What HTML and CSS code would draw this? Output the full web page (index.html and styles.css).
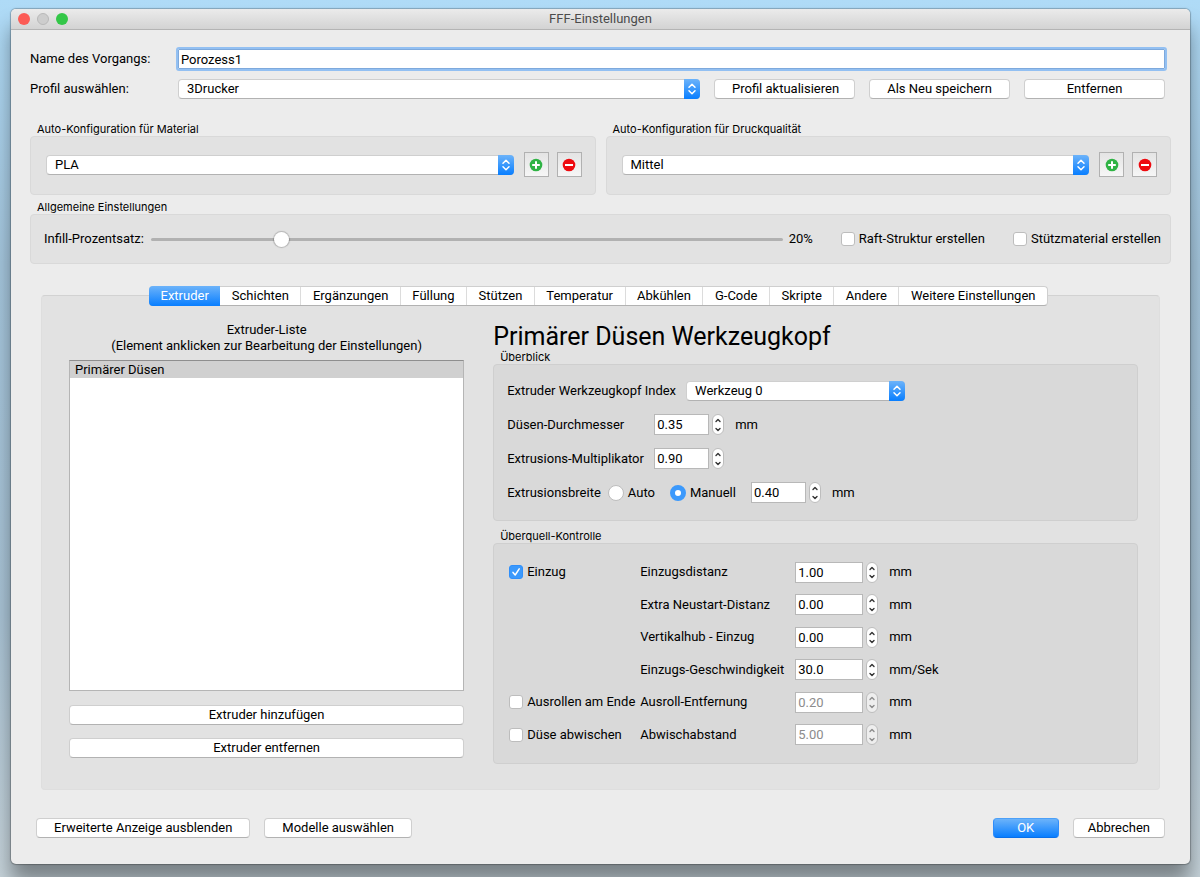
FILE: index.html
```html
<!DOCTYPE html>
<html lang="de">
<head>
    <meta charset="UTF-8">
    <meta name="viewport" content="width=device-width, initial-scale=1.0">
    <title>FFF-Einstellungen</title>
    <link rel="stylesheet" href="styles.css">
</head>
<body>
    <!-- shared icons -->
    <svg class="icon-defs" aria-hidden="true">
        <symbol id="icon-updown" viewBox="0 0 16 20">
            <path d="M5 8.2 8 5.2l3 3M5 11.8l3 3 3-3" fill="none" stroke="#fff" stroke-width="1.5" stroke-linecap="round" stroke-linejoin="round"/>
        </symbol>
        <symbol id="icon-up" viewBox="0 0 10 10">
            <path d="M3 6.5 5 4.5l2 2" fill="none" stroke="currentColor" stroke-width="1.4" stroke-linecap="round" stroke-linejoin="round"/>
        </symbol>
        <symbol id="icon-down" viewBox="0 0 10 10">
            <path d="M3 3.5l2 2 2-2" fill="none" stroke="currentColor" stroke-width="1.4" stroke-linecap="round" stroke-linejoin="round"/>
        </symbol>
        <symbol id="icon-plus" viewBox="0 0 14 14">
            <circle cx="7" cy="7" r="6.3" fill="#2fb344"/>
            <path d="M7 3.2v7.6M3.2 7h7.6" stroke="#fff" stroke-width="2"/>
        </symbol>
        <symbol id="icon-minus" viewBox="0 0 14 14">
            <circle cx="7" cy="7" r="6.3" fill="#ee0a0f"/>
            <path d="M3 7h8" stroke="#fff" stroke-width="2"/>
        </symbol>
    </svg>

    <div class="window">
        <header class="titlebar">
            <div class="lights">
                <span class="light red"></span>
                <span class="light gray"></span>
                <span class="light green"></span>
            </div>
            <h1>FFF-Einstellungen</h1>
        </header>

        <main class="content">
            <div class="profile">
                <label for="processName">Name des Vorgangs:</label>
                <input type="text" id="processName" class="process-name" value="Porozess1">

                <label for="profile">Profil auswählen:</label>
                <span class="select">
                    <select id="profile"><option>3Drucker</option></select>
                    <svg><use href="#icon-updown"/></svg>
                </span>
                <button class="btn">Profil aktualisieren</button>
                <button class="btn">Als Neu speichern</button>
                <button class="btn">Entfernen</button>
            </div>

            <div class="auto-config">
                <section>
                    <label class="caption" for="material">Auto-Konfiguration für Material</label>
                    <div class="box config-row">
                        <span class="select">
                            <select id="material"><option>PLA</option></select>
                            <svg><use href="#icon-updown"/></svg>
                        </span>
                        <button class="icon-btn" aria-label="Material hinzufügen"><svg><use href="#icon-plus"/></svg></button>
                        <button class="icon-btn" aria-label="Material entfernen"><svg><use href="#icon-minus"/></svg></button>
                    </div>
                </section>
                <section>
                    <label class="caption" for="quality">Auto-Konfiguration für Druckqualität</label>
                    <div class="box config-row">
                        <span class="select">
                            <select id="quality"><option>Mittel</option></select>
                            <svg><use href="#icon-updown"/></svg>
                        </span>
                        <button class="icon-btn" aria-label="Qualität hinzufügen"><svg><use href="#icon-plus"/></svg></button>
                        <button class="icon-btn" aria-label="Qualität entfernen"><svg><use href="#icon-minus"/></svg></button>
                    </div>
                </section>
            </div>

            <section class="general">
                <h2 class="caption">Allgemeine Einstellungen</h2>
                <div class="box general-row">
                    <label for="infill">Infill-Prozentsatz:</label>
                    <input type="range" id="infill" min="0" max="100" value="20">
                    <output for="infill" id="infillValue">20%</output>
                    <label class="check"><input type="checkbox">Raft-Struktur erstellen</label>
                    <label class="check"><input type="checkbox">Stützmaterial erstellen</label>
                </div>
            </section>

            <div class="pane">
                <div class="tabs" role="tablist">
                    <button role="tab" class="active" aria-selected="true">Extruder</button>
                    <button role="tab">Schichten</button>
                    <button role="tab">Ergänzungen</button>
                    <button role="tab">Füllung</button>
                    <button role="tab">Stützen</button>
                    <button role="tab">Temperatur</button>
                    <button role="tab">Abkühlen</button>
                    <button role="tab">G-Code</button>
                    <button role="tab">Skripte</button>
                    <button role="tab">Andere</button>
                    <button role="tab">Weitere Einstellungen</button>
                </div>

                <div class="columns">
                    <div class="extruders">
                        <p>Extruder-Liste<br>(Element anklicken zur Bearbeitung der Einstellungen)</p>
                        <ul class="list">
                            <li class="selected">Primärer Düsen</li>
                        </ul>
                        <button class="btn">Extruder hinzufügen</button>
                        <button class="btn">Extruder entfernen</button>
                    </div>

                    <div class="toolhead">
                        <h2>Primärer Düsen Werkzeugkopf</h2>

                        <h3 class="caption">Überblick</h3>
                        <div class="box overview">
                            <div class="row">
                                <label for="toolIndex">Extruder Werkzeugkopf Index</label>
                                <span class="select tool-select">
                                    <select id="toolIndex"><option>Werkzeug 0</option></select>
                                    <svg><use href="#icon-updown"/></svg>
                                </span>
                            </div>
                            <div class="row">
                                <label class="wide" for="diameter">Düsen-Durchmesser</label>
                                <span class="spin">
                                    <input type="number" id="diameter" step="0.01" value="0.35">
                                    <span class="stepper">
                                        <button aria-label="Mehr"><svg><use href="#icon-up"/></svg></button>
                                        <button aria-label="Weniger"><svg><use href="#icon-down"/></svg></button>
                                    </span>
                                    mm
                                </span>
                            </div>
                            <div class="row">
                                <label class="wide" for="multiplier">Extrusions-Multiplikator</label>
                                <span class="spin">
                                    <input type="number" id="multiplier" step="0.01" value="0.90">
                                    <span class="stepper">
                                        <button aria-label="Mehr"><svg><use href="#icon-up"/></svg></button>
                                        <button aria-label="Weniger"><svg><use href="#icon-down"/></svg></button>
                                    </span>
                                </span>
                            </div>
                            <div class="row width-row">
                                <label for="extrusionWidth">Extrusionsbreite</label>
                                <label class="check"><input type="radio" name="widthMode">Auto</label>
                                <label class="check"><input type="radio" name="widthMode" checked>Manuell</label>
                                <span class="spin">
                                    <input type="number" id="extrusionWidth" step="0.01" value="0.40">
                                    <span class="stepper">
                                        <button aria-label="Mehr"><svg><use href="#icon-up"/></svg></button>
                                        <button aria-label="Weniger"><svg><use href="#icon-down"/></svg></button>
                                    </span>
                                    mm
                                </span>
                            </div>
                        </div>

                        <h3 class="caption ooze-caption">Überquell-Kontrolle</h3>
                        <div class="box ooze">
                            <label class="check"><input type="checkbox" checked>Einzug</label>
                            <label for="retraction">Einzugsdistanz</label>
                            <span class="spin">
                                <input type="number" id="retraction" step="0.01" value="1.00">
                                <span class="stepper">
                                    <button aria-label="Mehr"><svg><use href="#icon-up"/></svg></button>
                                    <button aria-label="Weniger"><svg><use href="#icon-down"/></svg></button>
                                </span>
                                mm
                            </span>

                            <label class="second" for="restart">Extra Neustart-Distanz</label>
                            <span class="spin">
                                <input type="number" id="restart" step="0.01" value="0.00">
                                <span class="stepper">
                                    <button aria-label="Mehr"><svg><use href="#icon-up"/></svg></button>
                                    <button aria-label="Weniger"><svg><use href="#icon-down"/></svg></button>
                                </span>
                                mm
                            </span>

                            <label class="second" for="lift">Vertikalhub - Einzug</label>
                            <span class="spin">
                                <input type="number" id="lift" step="0.01" value="0.00">
                                <span class="stepper">
                                    <button aria-label="Mehr"><svg><use href="#icon-up"/></svg></button>
                                    <button aria-label="Weniger"><svg><use href="#icon-down"/></svg></button>
                                </span>
                                mm
                            </span>

                            <label class="second" for="speed">Einzugs-Geschwindigkeit</label>
                            <span class="spin">
                                <input type="number" id="speed" step="0.1" value="30.0">
                                <span class="stepper">
                                    <button aria-label="Mehr"><svg><use href="#icon-up"/></svg></button>
                                    <button aria-label="Weniger"><svg><use href="#icon-down"/></svg></button>
                                </span>
                                mm/Sek
                            </span>

                            <label class="check"><input type="checkbox">Ausrollen am Ende</label>
                            <label for="coast">Ausroll-Entfernung</label>
                            <span class="spin">
                                <input type="number" id="coast" step="0.01" value="0.20" disabled>
                                <span class="stepper">
                                    <button aria-label="Mehr" disabled><svg><use href="#icon-up"/></svg></button>
                                    <button aria-label="Weniger" disabled><svg><use href="#icon-down"/></svg></button>
                                </span>
                                mm
                            </span>

                            <label class="check"><input type="checkbox">Düse abwischen</label>
                            <label for="wipe">Abwischabstand</label>
                            <span class="spin">
                                <input type="number" id="wipe" step="0.01" value="5.00" disabled>
                                <span class="stepper">
                                    <button aria-label="Mehr" disabled><svg><use href="#icon-up"/></svg></button>
                                    <button aria-label="Weniger" disabled><svg><use href="#icon-down"/></svg></button>
                                </span>
                                mm
                            </span>
                        </div>
                    </div>
                </div>
            </div>

            <footer class="actions">
                <button class="btn">Erweiterte Anzeige ausblenden</button>
                <button class="btn">Modelle auswählen</button>
                <button class="btn primary">OK</button>
                <button class="btn cancel">Abbrechen</button>
            </footer>
        </main>
    </div>

    <script>
        const infill = document.getElementById('infill');
        const infillValue = document.getElementById('infillValue');

        infill.addEventListener('input', () => {
            infillValue.textContent = infill.value + '%';
        });

        document.querySelectorAll('.spin').forEach((spin) => {
            const input = spin.querySelector('input');
            const [up, down] = spin.querySelectorAll('button');
            const decimals = input.step.split('.')[1].length;

            function change(direction) {
                const value = parseFloat(input.value) + direction * parseFloat(input.step);
                input.value = Math.max(0, value).toFixed(decimals);
            }

            up.addEventListener('click', () => change(1));
            down.addEventListener('click', () => change(-1));
        });
    </script>
</body>
</html>
```

FILE: styles.css
```css
* {
    box-sizing: border-box;
}
body {
    margin: 0;
    padding: 9px 10px 13px 11px;
    min-height: 100vh;
    background: linear-gradient(#afdbf7, #a5c6dd 30%, #a9c3d5 70%, #c6d3da);
    font-family: Roboto, Inter, sans-serif;
    font-size: 13px;
    line-height: 16px;
    color: #000;
}
h1, h2, h3, p, ul {
    margin: 0;
    padding: 0;
    font-weight: normal;
}
button, input, select {
    margin: 0;
    font: inherit;
    color: inherit;
}
.icon-defs {
    position: absolute;
    width: 0;
    height: 0;
}

.window {
    background-color: #ececec;
    border-radius: 5px;
    box-shadow: 0 0 1px 1px rgba(0, 0, 0, 0.25), 0 18px 20px rgba(0, 0, 0, 0.38);
}
.titlebar {
    display: grid;
    grid-template-columns: 1fr auto 1fr;
    align-items: center;
    height: 21px;
    padding: 0 7px;
    background: linear-gradient(#ebebeb, #d3d3d3);
    border-bottom: 1px solid #b4b4b4;
    border-radius: 5px 5px 0 0;
}
.titlebar h1 {
    font-size: 13px;
    color: #4b4b4b;
}
.lights {
    display: flex;
    gap: 7px;
}
.light {
    width: 12px;
    height: 12px;
    border-radius: 50%;
}
.red {
    background-color: #fc5b55;
}
.gray {
    background-color: #cdcdcd;
    border: 1px solid #b9b9b9;
}
.green {
    background-color: #33c748;
}
.content {
    padding: 19px 19px 26px;
}

/* controls */
.btn {
    height: 20px;
    padding: 0 17px;
    line-height: 18px;
    white-space: nowrap;
    background-color: #fff;
    border: 1px solid #cfcfcf;
    border-bottom-color: #b2b2b2;
    border-radius: 4px;
}
.btn.primary {
    color: #fff;
    background: linear-gradient(#6cb3fa, #087eff);
    border-color: #4ca0f8 #2f8dfb #0a6fe8;
}
.select {
    position: relative;
    display: block;
}
.select select {
    display: block;
    width: 100%;
    height: 20px;
    padding: 0 20px 0 8px;
    appearance: none;
    background-color: #fff;
    border: 1px solid #cfcfcf;
    border-bottom-color: #b2b2b2;
    border-radius: 4px;
}
.select svg {
    position: absolute;
    top: 0;
    right: 0;
    width: 16px;
    height: 20px;
    background: linear-gradient(#6cb3fa, #087eff);
    border-radius: 0 4px 4px 0;
    pointer-events: none;
}
.icon-btn {
    display: grid;
    place-items: center;
    width: 25px;
    height: 25px;
    padding: 0;
    background: linear-gradient(#e4e4e4, #f6f6f6);
    border: 1px solid #b1b1b1;
}
.icon-btn svg {
    width: 14px;
    height: 14px;
}
.check {
    display: flex;
    align-items: center;
    gap: 4px;
    white-space: nowrap;
}
.check input {
    flex: none;
    width: 14px;
    height: 14px;
    appearance: none;
    background-color: #fff;
    border: 1px solid #bdbdbd;
    border-radius: 3px;
}
.check input[type="checkbox"]:checked {
    border-color: #2f8ffb;
    background: #3b99fc url("data:image/svg+xml,%3Csvg xmlns='http://www.w3.org/2000/svg' viewBox='0 0 12 12'%3E%3Cpath d='M3 6.4 5.2 9 9.2 2.8' fill='none' stroke='white' stroke-width='1.5' stroke-linecap='round' stroke-linejoin='round'/%3E%3C/svg%3E");
}
.check input[type="radio"] {
    width: 16px;
    height: 16px;
    border-radius: 50%;
}
.check input[type="radio"]:checked {
    border: 5px solid #3b99fc;
}
.caption {
    display: block;
    padding: 1px 0 0 7px;
    font-family: Inter, Roboto, sans-serif;
    font-size: 11px;
    line-height: 14px;
}
.box {
    background-color: #e2e2e2;
    border: 1px solid #d9d9d9;
    border-radius: 4px;
}

/* process and profile */
.profile {
    display: grid;
    grid-template-columns: 134px 1fr repeat(3, 141px);
    gap: 10px 14px;
    align-items: center;
    padding-right: 6px;
}
.process-name {
    grid-column: 2 / -1;
    height: 20px;
    padding: 0 2px;
    background-color: #fff;
    border: 1px solid #7ea9dc;
    outline: 2px solid #93c0f2;
    border-radius: 1px;
}

.auto-config {
    display: grid;
    grid-template-columns: 1fr 1fr;
    gap: 10px;
    margin-top: 22px;
}
.config-row {
    display: flex;
    align-items: center;
    height: 59px;
    padding: 0 13px 2px 15px;
}
.config-row .select {
    flex: 1;
    margin-right: 10px;
}
.icon-btn + .icon-btn {
    margin-left: 8px;
}

.general {
    margin-top: 4px;
}
.general-row {
    display: flex;
    align-items: center;
    height: 50px;
    padding: 0 9px 0 13px;
}
.general-row .check {
    margin-left: 28px;
}
#infill {
    flex: 1;
    min-width: 0;
    height: 16px;
    margin: 0 6px 0 7px;
    appearance: none;
    background: none;
}
#infill::-webkit-slider-runnable-track {
    height: 3px;
    background-color: #b1b1b1;
    border-radius: 2px;
}
#infill::-webkit-slider-thumb {
    width: 15px;
    height: 15px;
    margin-top: -6px;
    appearance: none;
    background-color: #fff;
    border-radius: 50%;
    box-shadow: 0 0 1px 1px rgba(0, 0, 0, 0.2);
}

/* tab pane */
.pane {
    margin: 31px 11px 0;
    padding: 0 21px 25px 27px;
    background-color: #e2e2e2;
    border: 1px solid #d6d6d6;
    border-color: #d2d2d2 #dedede #dedede;
    border-radius: 4px;
}
.tabs {
    display: flex;
    height: 20px;
    margin: -10px 90px 0 80px;
    background-color: #fff;
    border: 1px solid #cfcfcf;
    border-bottom-color: #b2b2b2;
    border-radius: 4px;
}
.tabs button {
    flex: auto;
    padding: 0;
    background: none;
    border: 0;
    border-right: 1px solid #dcdcdc;
    white-space: nowrap;
}
.tabs button:last-child {
    border-right: 0;
}
.tabs .active {
    margin: -1px 0 -1px -1px;
    color: #fff;
    background: linear-gradient(#6cb3fa, #087eff);
    border-right: 0;
    border-radius: 4px 0 0 4px;
}
.columns {
    display: grid;
    grid-template-columns: 19fr 31fr;
    gap: 29px;
    margin-top: 16px;
}
.extruders {
    display: flex;
    flex-direction: column;
    min-width: 0;
}
.extruders p {
    text-align: center;
}
.list {
    height: 331px;
    margin: 6px 0 1px;
    list-style: none;
    background-color: #fff;
    border: 1px solid #b5b5b5;
    border-top-color: #8e8e8e;
}
.list li {
    padding: 1px 5px 0;
    background-color: #d0d0d0;
}
.extruders .btn {
    margin-top: 13px;
}

.toolhead h2 {
    padding-top: 2px;
    font-size: 25px;
    line-height: 25px;
}
.toolhead .box {
    background-color: #d9d9d9;
    border-color: #cfcfcf;
}
.spin {
    display: flex;
    align-items: center;
}
.spin input {
    width: 55px;
    height: 21px;
    margin-right: 3px;
    padding: 0 2px;
    background-color: #fff;
    border: 1px solid #b8b8b8;
    border-radius: 0;
    appearance: textfield;
}
.spin input::-webkit-inner-spin-button {
    appearance: none;
    margin: 0;
}
.spin input:disabled {
    color: #8c8c8c;
}
.stepper {
    display: flex;
    flex-direction: column;
    width: 12px;
    height: 21px;
    margin-right: 11px;
    overflow: hidden;
    color: #333;
    background-color: #fff;
    border: 1px solid #bdbdbd;
    border-radius: 6px;
}
.stepper button {
    display: block;
    height: 50%;
    padding: 0;
    background: none;
    border: 0;
}
.stepper svg {
    display: block;
    width: 10px;
    height: 10px;
}
.stepper:has(:disabled) {
    color: #8c8c8c;
    background-color: #eee;
}
.overview {
    display: flex;
    flex-direction: column;
    gap: 13px;
    height: 157px;
    padding: 15px 13px;
}
.row {
    display: flex;
    flex: none;
    align-items: center;
    height: 21px;
}
.wide {
    width: 147px;
}
.tool-select {
    width: 219px;
    margin-left: 10px;
}
.width-row .check {
    margin-left: 7px;
}
.width-row .check + .check,
.width-row .spin {
    margin-left: 15px;
}
.ooze-caption {
    margin-top: 7px;
}
.ooze {
    display: grid;
    grid-template-columns: 131px 155px 1fr;
    grid-auto-rows: 1fr;
    align-items: center;
    height: 221px;
    padding: 12px 15px;
}
.ooze .second {
    grid-column: 2;
}
.ooze .spin input {
    width: 68px;
}

.actions {
    display: flex;
    gap: 14px;
    margin-top: 28px;
    padding: 0 6px;
}
.actions .primary {
    width: 66px;
    margin-left: auto;
}
.actions .cancel {
    padding: 0 14px;
}
```
